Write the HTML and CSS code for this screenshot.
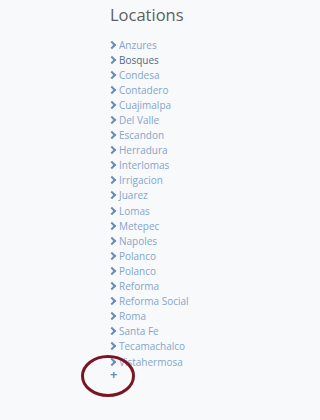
FILE: index.html
```html
<!DOCTYPE html>
<html>
<head>
<meta charset="utf-8">
<link rel="stylesheet" href="styles.css">
</head>
<body>
<div class="panel">
  <h2 class="title">Locations</h2>
  <ul class="list">
    <li><span class="chev"></span><a>Anzures</a></li>
    <li class="active"><span class="chev"></span><a>Bosques</a></li>
    <li><span class="chev"></span><a>Condesa</a></li>
    <li><span class="chev"></span><a>Contadero</a></li>
    <li><span class="chev"></span><a>Cuajimalpa</a></li>
    <li><span class="chev"></span><a>Del Valle</a></li>
    <li><span class="chev"></span><a>Escandon</a></li>
    <li><span class="chev"></span><a>Herradura</a></li>
    <li><span class="chev"></span><a>Interlomas</a></li>
    <li><span class="chev"></span><a>Irrigacion</a></li>
    <li><span class="chev"></span><a>Juarez</a></li>
    <li><span class="chev"></span><a>Lomas</a></li>
    <li><span class="chev"></span><a>Metepec</a></li>
    <li><span class="chev"></span><a>Napoles</a></li>
    <li><span class="chev"></span><a>Polanco</a></li>
    <li><span class="chev"></span><a>Polanco</a></li>
    <li><span class="chev"></span><a>Reforma</a></li>
    <li><span class="chev"></span><a>Reforma Social</a></li>
    <li><span class="chev"></span><a>Roma</a></li>
    <li><span class="chev"></span><a>Santa Fe</a></li>
    <li><span class="chev"></span><a>Tecamachalco</a></li>
    <li><span class="chev"></span><a>Vistahermosa</a></li>
    <li class="add"><span class="plus">+</span>
      <svg class="ring" width="56" height="44" viewBox="0 0 56 44"><ellipse cx="28" cy="22" rx="25.5" ry="19.5" fill="none" stroke="#7b1523" stroke-width="3"/></svg>
    </li>
  </ul>
</div>
</body>
</html>
```
FILE: styles.css
```css
html, body { margin: 0; padding: 0; }
body {
  background: #f7f9fb;
  font-family: "Open Sans", "Liberation Sans", sans-serif;
  width: 284px;
  height: 420px;
  overflow: hidden;
}
.panel {
  padding: 3px 0 0 110px;
}
.title {
  margin: 0;
  font-weight: 400;
  font-size: 16.5px;
  line-height: 24px;
  color: #5f5f5f;
}
.list {
  list-style: none;
  margin: 10px 0 0 0;
  padding: 0;
}
.list li {
  display: flex;
  align-items: center;
  height: 15.1px;
  font-size: 10px;
  color: #86a5ca;
}
.list li.active { color: #52698a; }
.chev {
  width: 4px;
  height: 4px;
  border-top: 2px solid #6a8db5;
  border-right: 2px solid #6a8db5;
  transform: rotate(45deg);
  margin: 0 4px 0 -1px;
}
.list a { color: inherit; }
.add { position: relative; margin-top: -3px; }
.plus {
  font-weight: 700;
  font-size: 13px;
  color: #6a8db5;
}
.ring {
  position: absolute;
  left: -30px;
  top: -12px;
}
```
